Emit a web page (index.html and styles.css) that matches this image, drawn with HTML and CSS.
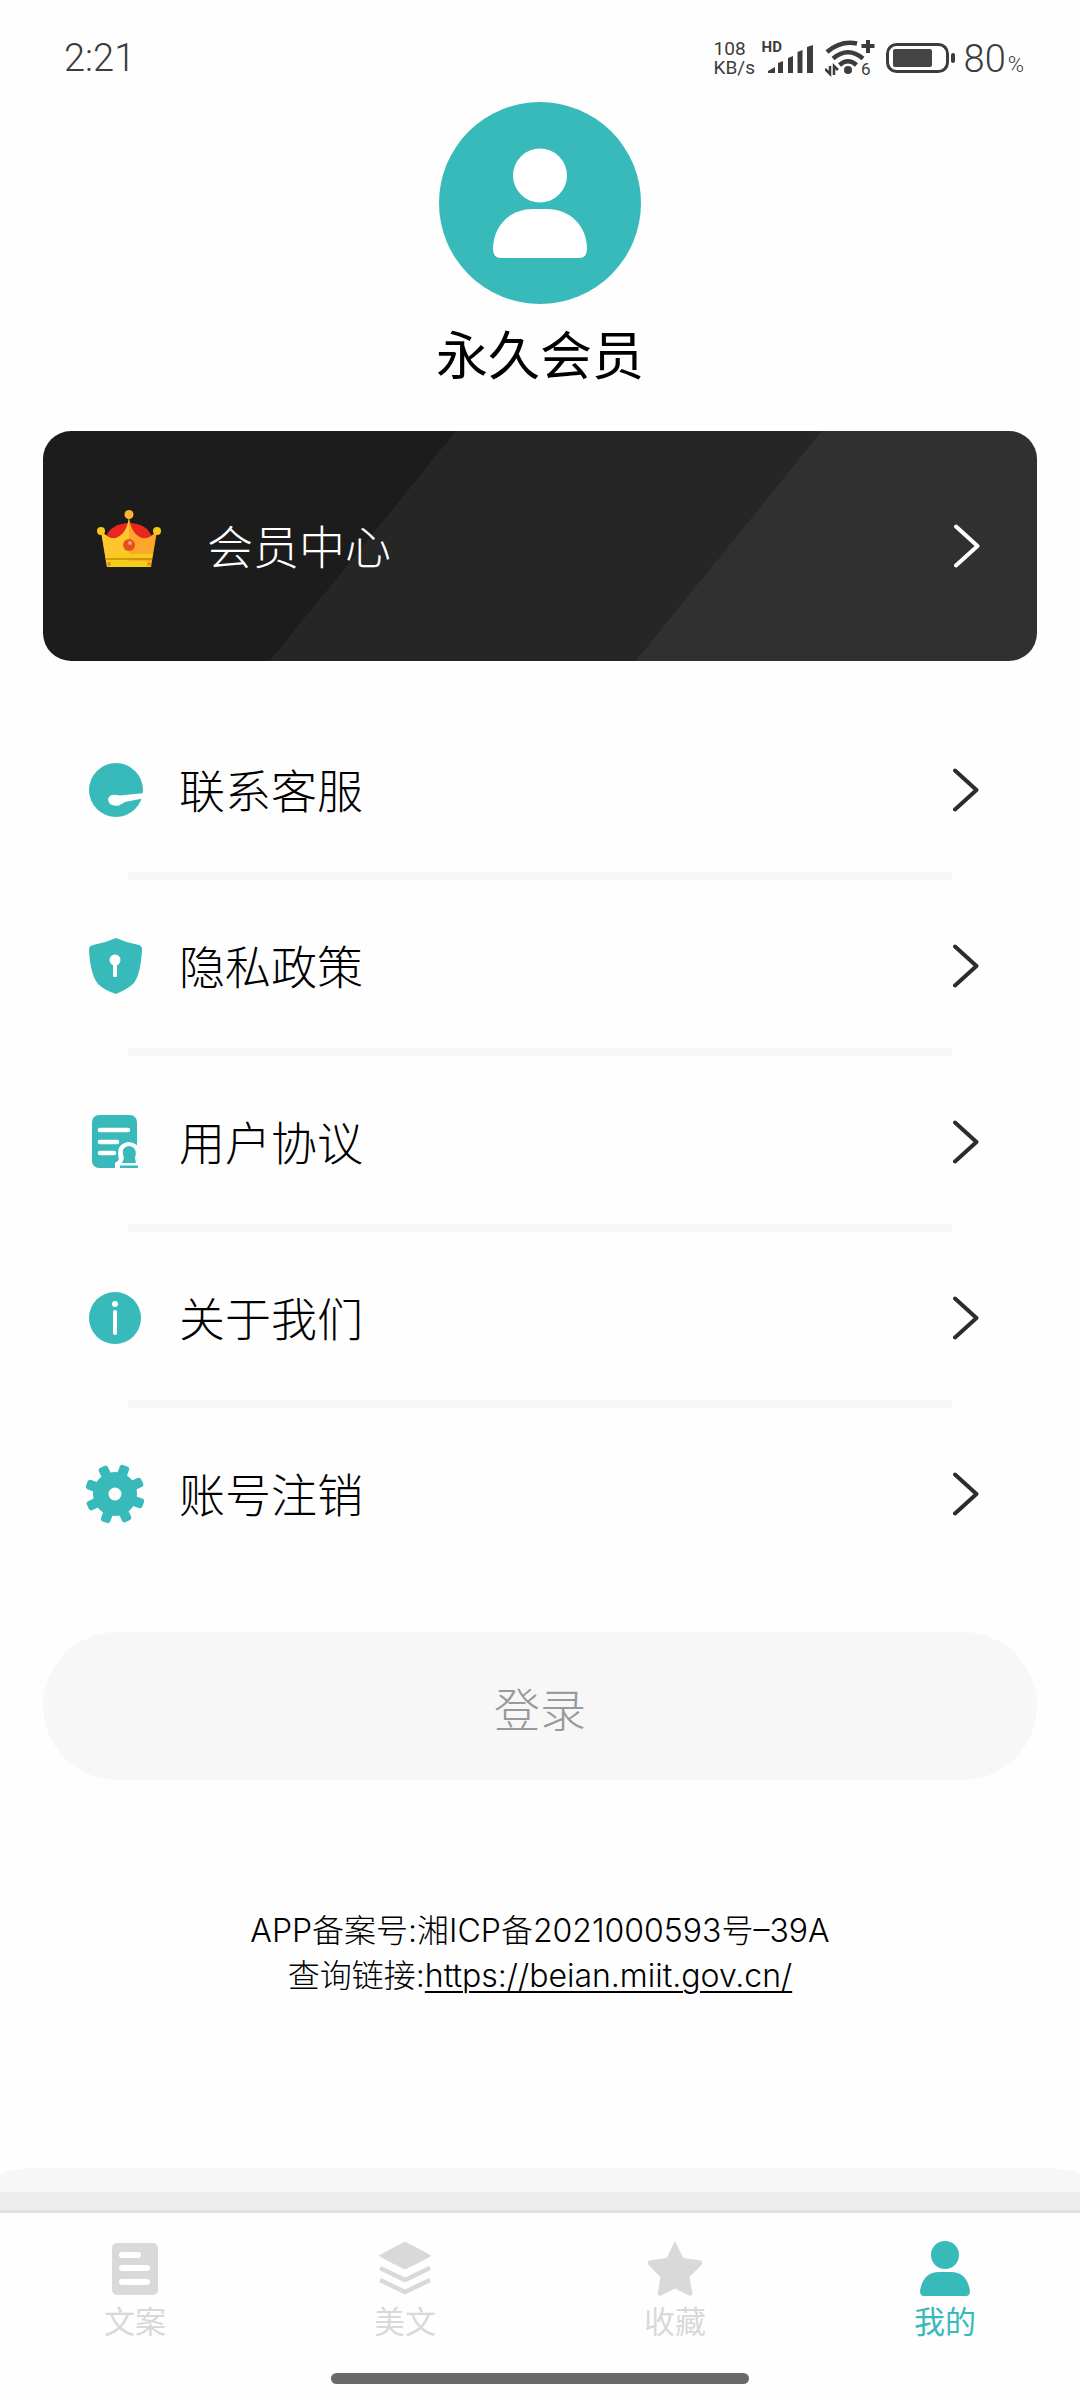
FILE: index.html
```html
<!DOCTYPE html>
<html lang="zh-CN">
<head>
<meta charset="utf-8">
<meta name="viewport" content="width=device-width, initial-scale=1">
<title>我的</title>
<link rel="stylesheet" href="styles.css">
</head>
<body>
<svg class="defs" aria-hidden="true">
  <symbol id="chevron" viewBox="0 0 26 44"><path d="M2 2.500 23.500 22 2 41.500" fill="none" stroke="currentColor" stroke-width="4" stroke-linecap="round" stroke-linejoin="round"/></symbol>
</svg>

<header class="status">
  <time class="status-time">2:21</time>
  <div class="status-right">
    <div class="net"><span>108</span><span>KB/s</span></div>
    <div class="signal">
      <span class="hd">HD</span>
      <svg width="46" height="28" viewBox="0 0 46 28" fill="#3c3c3c"><path d="M0 28v-2l7-4v6zM10 28V18l5-2v12zM20 28V13l5-2v17zM29.500 28V7l5-2v23zM39 28V2l6-2v28z"/></svg>
    </div>
    <svg class="wifi" width="50" height="48" viewBox="0 -6 50 48">
      <g fill="none" stroke="#3c3c3c" stroke-width="4.500"><path d="M2 12Q16 0 32 3.500"/><path d="M8 18.500Q23 6 38 18.500"/><path d="M14.500 25Q23 17.500 31.500 25"/><path d="M36.500 6h13M43 0v13" stroke-width="4"/></g>
      <circle cx="23" cy="30" r="4" fill="#3c3c3c"/>
      <path d="M0 29l5 5v-8M9 35v-9l4 4" fill="none" stroke="#3c3c3c" stroke-width="2.500"/>
      <text x="36" y="35" font-size="17" fill="#3c3c3c">6</text>
    </svg>
    <svg class="battery" width="70" height="30" viewBox="0 0 70 30"><rect x="1.500" y="1.500" width="60" height="27" rx="9" fill="none" stroke="#3c3c3c" stroke-width="3"/><rect x="7" y="6" width="39" height="18" rx="2" fill="#444"/><rect x="65" y="10" width="4" height="10" rx="2" fill="#3c3c3c"/></svg>
    <div class="charge"><span>80</span><span class="percent">%</span></div>
  </div>
</header>

<main class="page">
  <section class="profile">
    <svg class="avatar" viewBox="0 0 202 202"><circle cx="101" cy="101" r="101" fill="#38baba"/><circle cx="101" cy="73.500" r="27" fill="#fff"/><path d="M54 147C54 124 71 107 94 107h14c23 0 40 17 40 40q0 9-8 9H62q-8 0-8-9z" fill="#fff"/></svg>
    <h1 class="name">永久会员</h1>
  </section>

  <a class="vip" href="#vip">
    <svg class="crown" viewBox="0 0 64 58">
      <path d="M9 28C13 8 51 8 55 28L46 34H18z" fill="#e8281e"/>
      <path d="M4 21q9 9 15 7Q30 24 32 7q2 17 13 21 6 2 15-7L54 57H10z" fill="#fda62a"/>
      <path d="M4 21q9 9 15 7Q30 24 32 7V57H10z" fill="#fcc62c"/>
      <path d="M8 44h48l-1 4H9zM10 51h44v6H10z" fill="#f2cf16"/>
      <path d="M9 49h46" stroke="#c9860f" stroke-width="1.500"/>
      <circle cx="32" cy="4.500" r="4.500" fill="#fbb52e"/><circle cx="4" cy="21" r="4" fill="#f9c41c"/><circle cx="60" cy="21" r="4" fill="#f9c41c"/>
      <circle cx="32" cy="35" r="6" fill="#e2501e"/><circle cx="33" cy="33" r="2" fill="#f69a76"/><circle cx="12" cy="54" r="2" fill="#f08a18"/><circle cx="52" cy="54" r="2" fill="#f08a18"/>
    </svg>
    <span class="label vip-label">会员中心</span>
    <svg class="chevron chevron-light"><use href="#chevron"/></svg>
  </a>

  <nav class="menu">
    <a class="row" href="#contact">
      <svg class="icon" viewBox="0 0 60 60"><circle cx="31" cy="30" r="27" fill="#38baba"/><path d="M60 33 35 35.500Q24 33 23 39.500 24 47 34 45.500L40 42 60 38z" fill="#fff"/></svg>
      <span class="label">联系客服</span><svg class="chevron"><use href="#chevron"/></svg>
    </a>
    <a class="row" href="#privacy">
      <svg class="icon" viewBox="0 0 60 60"><path d="M31 2Q42 7 54 9q3 1 3 4-1 24-8 34-6 6-18 11Q19 54 13 48 5 38 4 13q0-3 4-4Q20 7 31 2z" fill="#38baba"/><circle cx="30" cy="24" r="5.500" fill="#fff"/><rect x="28" y="26" width="4" height="15" rx="1" fill="#fff"/></svg>
      <span class="label">隐私政策</span><svg class="chevron"><use href="#chevron"/></svg>
    </a>
    <a class="row" href="#terms">
      <svg class="icon" viewBox="0 0 60 60"><rect x="7" y="3" width="45" height="53" rx="7" fill="#38baba"/><path d="M15 18h28M15 30h17M15 41h14" stroke="#fff" stroke-width="4.500" stroke-linecap="round"/><path d="M30 60V51l4-3q-4-16 9-18 15 1 11 18l4 3v9z" fill="#fff"/><path d="M37 51l2-5q-4-11 5-12 9 1 6 12l1 5zM35 53.500h18v2.500H35z" fill="#38baba"/></svg>
      <span class="label">用户协议</span><svg class="chevron"><use href="#chevron"/></svg>
    </a>
    <a class="row" href="#about">
      <svg class="icon" viewBox="0 0 60 60"><circle cx="30" cy="30" r="26" fill="#38baba"/><circle cx="30" cy="16" r="3" fill="#fff"/><rect x="28" y="22" width="4" height="25" rx="2" fill="#fff"/></svg>
      <span class="label">关于我们</span><svg class="chevron"><use href="#chevron"/></svg>
    </a>
    <a class="row" href="#cancel">
      <svg class="icon" viewBox="0 0 60 60"><g fill="#38baba"><circle cx="30" cy="30" r="22"/><rect x="25" y="0" width="10" height="60" rx="3" transform="rotate(20 30 30)"/><rect x="25" y="0" width="10" height="60" rx="3" transform="rotate(65 30 30)"/><rect x="25" y="0" width="10" height="60" rx="3" transform="rotate(110 30 30)"/><rect x="25" y="0" width="10" height="60" rx="3" transform="rotate(155 30 30)"/></g><circle cx="30" cy="30" r="6.500" fill="#fff"/></svg>
      <span class="label">账号注销</span><svg class="chevron"><use href="#chevron"/></svg>
    </a>
  </nav>

  <button class="login" type="button">登录</button>

  <footer class="record">
    <p>APP备案号:湘ICP备2021000593号–39A</p>
    <p>查询链接:<a href="https://beian.miit.gov.cn/">https://beian.miit.gov.cn/</a></p>
  </footer>
</main>

<div class="tab-shade"></div>
<nav class="tabs">
  <a class="tab" href="#copy"><svg class="tab-icon" viewBox="0 0 56 56" fill="currentColor"><rect x="5" y="3" width="46" height="52" rx="5"/><path d="M15 15h16M15 28h25M15 42h25" stroke="#fff" stroke-width="6" stroke-linecap="round"/></svg>文案</a>
  <a class="tab" href="#essay"><svg class="tab-icon" viewBox="0 0 56 56" fill="currentColor"><path d="M28 2Q30 2 54 15.500 54 17 30 28.500q-2 1-4 0Q2 17 2 15.500 26 2 28 2z"/><path d="M3 28 28 40 53 28M3 40 28 52 53 40" fill="none" stroke="currentColor" stroke-width="4.500" stroke-linejoin="round"/></svg>美文</a>
  <a class="tab" href="#favorites"><svg class="tab-icon" viewBox="0 0 56 56" fill="currentColor"><path d="M28 2 36 18.500 54 21Q55 23 54 25L42 37 45 54Q44 56 42 55L28 48 14 55Q12 56 11 54L14 37 2 25Q1 23 2 21L20 18.500z" stroke="currentColor" stroke-linejoin="round"/></svg>收藏</a>
  <a class="tab tab-active" href="#mine" aria-current="page"><svg class="tab-icon" viewBox="0 0 56 56" fill="currentColor"><circle cx="28" cy="15" r="14"/><path d="M3 51Q6 32 22 32H34Q50 32 53 51 53 56 49 56H7Q3 56 3 51z"/></svg>我的</a>
</nav>
<div class="home-bar"></div>
</body>
</html>
```
FILE: styles.css
```css
* { box-sizing: border-box; }
body {
  margin: 0;
  min-height: 100vh;
  display: flex;
  flex-direction: column;
  background: #fefefe;
  color: #000;
  font-family: Roboto, "Noto Sans CJK SC", sans-serif;
  font-weight: 300;
}
a { color: inherit; text-decoration: none; }
p, h1 { margin: 0; }
svg { flex: none; display: block; }
.defs { position: absolute; width: 0; height: 0; }

.status {
  height: 102px;
  padding: 26px 56px 0 64px;
  display: flex;
  justify-content: space-between;
  align-items: flex-start;
  color: #3c3c3c;
  font-weight: 400;
}
.status-time { font-size: 38px; line-height: 64px; font-weight: 300; }
.status-right { display: flex; align-items: center; height: 64px; }
.net {
  display: flex;
  flex-direction: column;
  width: 46px;
  margin-right: 2px;
  font-size: 19px;
  line-height: 19px;
}
.signal { position: relative; width: 50px; padding: 2px 0 0 6px; margin-right: 13px; }
.hd { position: absolute; left: 0; top: -4px; font-size: 15px; line-height: 16px; font-weight: 700; }
.wifi { margin-right: 11px; }
.battery { margin-right: 8px; }
.charge { display: flex; align-items: baseline; padding-top: 2px; font-size: 38px; line-height: 60px; font-weight: 300; }
.percent { margin-left: 2px; font-size: 22px; line-height: 24px; }

.page { flex: 1; padding: 0 43px; }
.profile { display: flex; flex-direction: column; align-items: center; }
.avatar { width: 202px; height: 202px; }
.name { margin-top: 17px; font-size: 52px; line-height: 74px; font-weight: 400; }

.vip {
  display: flex;
  align-items: center;
  height: 230px;
  margin-top: 36px;
  padding: 0 57px 0 54px;
  border-radius: 28px;
  background: linear-gradient(129deg, #1c1c1c 35%, #262626 35%, #262626 66%, #303030 66%);
  color: #fff;
}
.crown { width: 64px; height: 58px; margin-bottom: 14px; }
.label { flex: 1; margin-left: 34px; padding-top: 4px; font-size: 46px; line-height: 68px; }
.vip-label { margin-left: 46px; }
.chevron { width: 26px; height: 44px; color: #2c2c2c; }
.chevron-light { color: #fff; }

.menu { margin-top: 43px; }
.row {
  position: relative;
  display: flex;
  align-items: center;
  height: 168px;
  padding: 3px 58px 0 42px;
}
.row + .row { margin-top: 8px; }
.row + .row::before {
  content: "";
  position: absolute;
  top: -8px;
  left: 85px;
  right: 85px;
  height: 8px;
  background: #f7f7f7;
}
.icon { width: 60px; height: 60px; }

.login {
  display: block;
  width: 100%;
  height: 148px;
  margin-top: 56px;
  padding: 2px 0 0;
  border: 0;
  border-radius: 74px;
  background: #f7f7f7;
  color: #999;
  font: inherit;
  font-size: 46px;
}
.record {
  margin-top: 128px;
  text-align: center;
  font-family: Inter, "Noto Sans CJK SC", sans-serif;
  font-size: 32px;
  line-height: 45px;
}
.record a { text-decoration: underline; text-decoration-thickness: 2px; text-underline-offset: 4px; }

.tab-shade {
  height: 45px;
  border-radius: 40px 40px 0 0 / 8px 8px 0 0;
  background: linear-gradient(#f7f7f7 24px, #ededed 24px, #ededed 42px, #e1e1e1 42px);
}
.tabs { display: flex; height: 160px; padding-top: 27px; background: #fefefe; }
.tab {
  flex: 1;
  display: flex;
  flex-direction: column;
  align-items: center;
  color: #d9d9d9;
  font-size: 31px;
  line-height: 46px;
  font-weight: 400;
}
.tab-icon { width: 56px; height: 56px; margin-bottom: 4px; }
.tab-active { color: #38baba; }
.home-bar {
  width: 418px;
  height: 11px;
  margin: 0 auto 16px;
  border-radius: 6px;
  background: #6a6a6a;
}
```
